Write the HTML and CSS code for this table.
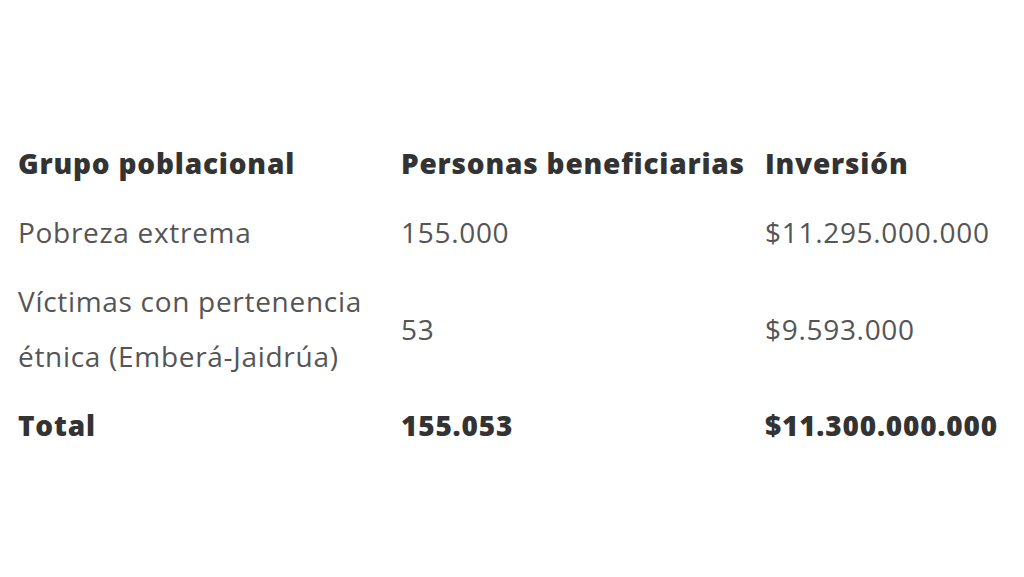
FILE: index.html
```html
<!DOCTYPE html>
<html lang="es">
<head>
<meta charset="utf-8">
<link rel="stylesheet" href="styles.css">
</head>
<body>
<main class="page">
  <table class="tabla">
    <thead>
      <tr>
        <th class="c1">Grupo poblacional</th>
        <th class="c2">Personas beneficiarias</th>
        <th class="c3">Inversión</th>
      </tr>
    </thead>
    <tbody>
      <tr>
        <td>Pobreza extrema</td>
        <td>155.000</td>
        <td>$11.295.000.000</td>
      </tr>
      <tr>
        <td>Víctimas con pertenencia<br>étnica (Emberá-Jaidrúa)</td>
        <td>53</td>
        <td>$9.593.000</td>
      </tr>
      <tr class="total">
        <td>Total</td>
        <td>155.053</td>
        <td>$11.300.000.000</td>
      </tr>
    </tbody>
  </table>
</main>
</body>
</html>
```
FILE: styles.css
```css
html, body {
  margin: 0;
  padding: 0;
  background: #ffffff;
}
.page {
  padding: 129px 0 0 18px;
  font-family: "Open Sans", "Liberation Sans", sans-serif;
}
.tabla {
  border-collapse: collapse;
  font-size: 28px;
  line-height: 55px;
  letter-spacing: 0.7px;
  color: #555555;
}
.tabla th,
.tabla td {
  padding: 7px 0;
  text-align: left;
  vertical-align: middle;
  white-space: nowrap;
}
.tabla th {
  font-weight: 800;
  letter-spacing: 0.8px;
  color: #333333;
}
.c1 { width: 383px; }
.c2 { width: 364px; }
.total td {
  font-weight: 800;
  letter-spacing: 0.8px;
  color: #333333;
}
```
